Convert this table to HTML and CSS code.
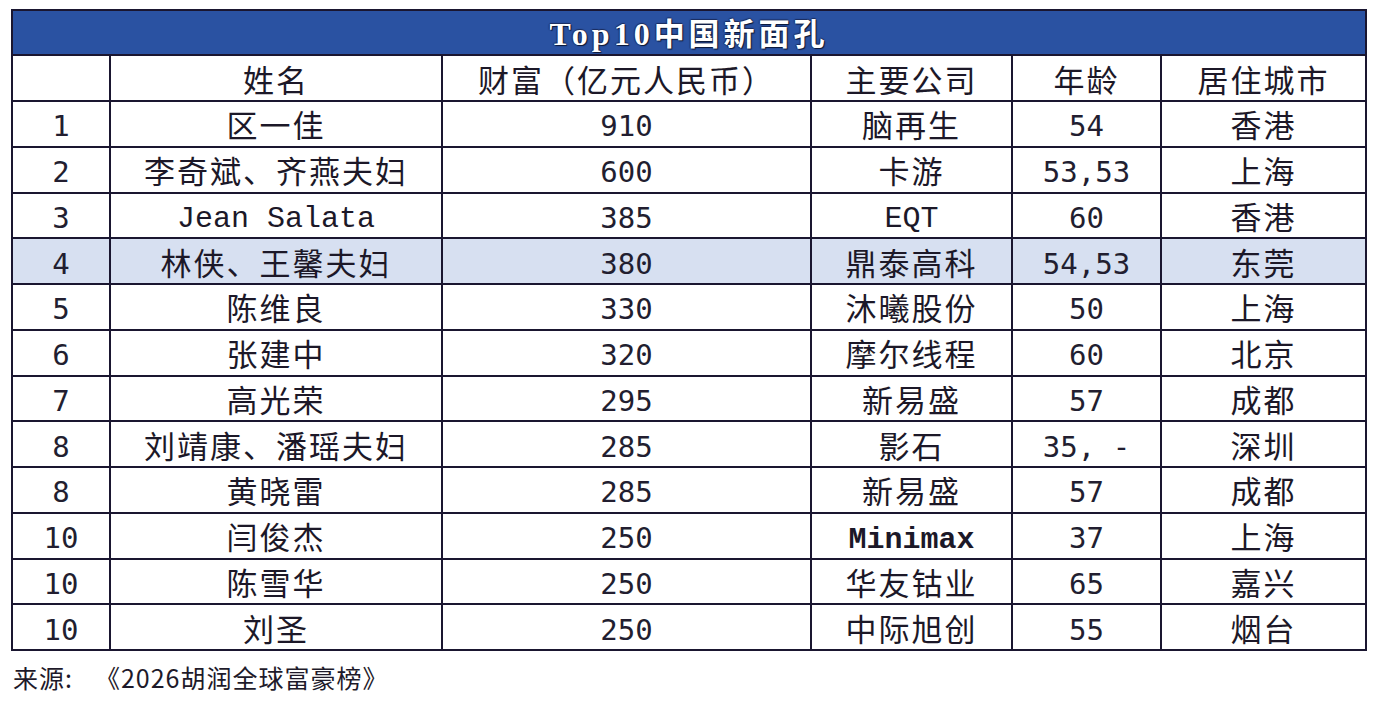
FILE: index.html
```html
<!DOCTYPE html>
<html lang="zh-CN">
<head>
<meta charset="utf-8">
<title>Top10中国新面孔</title>
<link rel="stylesheet" href="styles.css">
</head>
<body>
<table class="rank-table">
  <colgroup>
    <col class="c-rank"><col class="c-name"><col class="c-wealth"><col class="c-company"><col class="c-age"><col class="c-city">
  </colgroup>
  <thead>
    <tr class="title-row"><th colspan="6"><span class="lat">Top10</span>中国新面孔</th></tr>
    <tr class="head-row">
      <th></th><th>姓名</th><th>财富（亿元人民币）</th><th>主要公司</th><th>年龄</th><th>居住城市</th>
    </tr>
  </thead>
  <tbody>
    <tr><td class="num">1</td><td>区一佳</td><td class="num">910</td><td>脑再生</td><td class="num">54</td><td>香港</td></tr>
    <tr><td class="num">2</td><td>李奇斌、齐燕夫妇</td><td class="num">600</td><td>卡游</td><td class="num">53,53</td><td>上海</td></tr>
    <tr><td class="num">3</td><td class="mono">Jean Salata</td><td class="num">385</td><td class="mono">EQT</td><td class="num">60</td><td>香港</td></tr>
    <tr class="hl"><td class="num">4</td><td>林侠、王馨夫妇</td><td class="num">380</td><td>鼎泰高科</td><td class="num">54,53</td><td>东莞</td></tr>
    <tr><td class="num">5</td><td>陈维良</td><td class="num">330</td><td>沐曦股份</td><td class="num">50</td><td>上海</td></tr>
    <tr><td class="num">6</td><td>张建中</td><td class="num">320</td><td>摩尔线程</td><td class="num">60</td><td>北京</td></tr>
    <tr><td class="num">7</td><td>高光荣</td><td class="num">295</td><td>新易盛</td><td class="num">57</td><td>成都</td></tr>
    <tr><td class="num">8</td><td>刘靖康、潘瑶夫妇</td><td class="num">285</td><td>影石</td><td class="num">35,&nbsp;-</td><td>深圳</td></tr>
    <tr><td class="num">8</td><td>黄晓雷</td><td class="num">285</td><td>新易盛</td><td class="num">57</td><td>成都</td></tr>
    <tr><td class="num">10</td><td>闫俊杰</td><td class="num">250</td><td class="mono bold">Minimax</td><td class="num">37</td><td>上海</td></tr>
    <tr><td class="num">10</td><td>陈雪华</td><td class="num">250</td><td>华友钴业</td><td class="num">65</td><td>嘉兴</td></tr>
    <tr><td class="num">10</td><td>刘圣</td><td class="num">250</td><td>中际旭创</td><td class="num">55</td><td>烟台</td></tr>
  </tbody>
</table>
<p class="source"><span class="src-label">来源:</span><span>《2026胡润全球富豪榜》</span></p>
</body>
</html>
```

FILE: styles.css
```css
html, body {
  margin: 0;
  padding: 0;
  background: #ffffff;
}

body {
  padding: 9px 0 0 11px;
  font-family: "Noto Sans CJK SC", "Noto Sans", sans-serif;
  color: #1c1828;
}

.rank-table {
  width: 1354px;
  border-collapse: collapse;
  table-layout: fixed;
  border: 2px solid #1a1630;
}

.c-rank { width: 98px; }
.c-name { width: 332px; }
.c-wealth { width: 369px; }
.c-company { width: 201px; }
.c-age { width: 149px; }
.c-city { width: 205px; }

.rank-table th,
.rank-table td {
  border: 2px solid #1a1630;
  padding: 0;
  text-align: center;
  vertical-align: middle;
  font-weight: 400;
  font-size: 31px;
  letter-spacing: 2px;
  line-height: 1;
  white-space: nowrap;
}

.title-row th {
  height: 43px;
  background: #2a52a2;
  color: #ffffff;
  font-weight: 700;
  font-size: 31px;
  letter-spacing: 4px;
  text-shadow: 1px 1px 1px #0b1634, -1px 0 1px #1b2c5c, 0 -1px 1px #1b2c5c;
}

.title-row .lat {
  font-family: "Liberation Serif", serif;
  font-size: 32px;
  letter-spacing: 4px;
}

.head-row th {
  height: 44px;
}

.rank-table tbody tr {
  height: 45.75px;
}

.rank-table tr.hl td {
  background: #d7e0f1;
}

.rank-table td.num {
  font-family: "DejaVu Sans Mono", monospace;
  font-size: 29px;
  letter-spacing: 0;
  padding-top: 6px;
  color: #221e30;
}

.rank-table td.mono {
  font-family: "Liberation Mono", monospace;
  font-size: 30px;
  letter-spacing: 0;
  padding-top: 8px;
}

.rank-table td.bold {
  font-weight: 700;
}

.source {
  margin: 11px 0 0 2px;
  font-size: 25px;
  line-height: 30px;
  letter-spacing: 1px;
  color: #1e1a2a;
  display: flex;
  gap: 22px;
}
```
